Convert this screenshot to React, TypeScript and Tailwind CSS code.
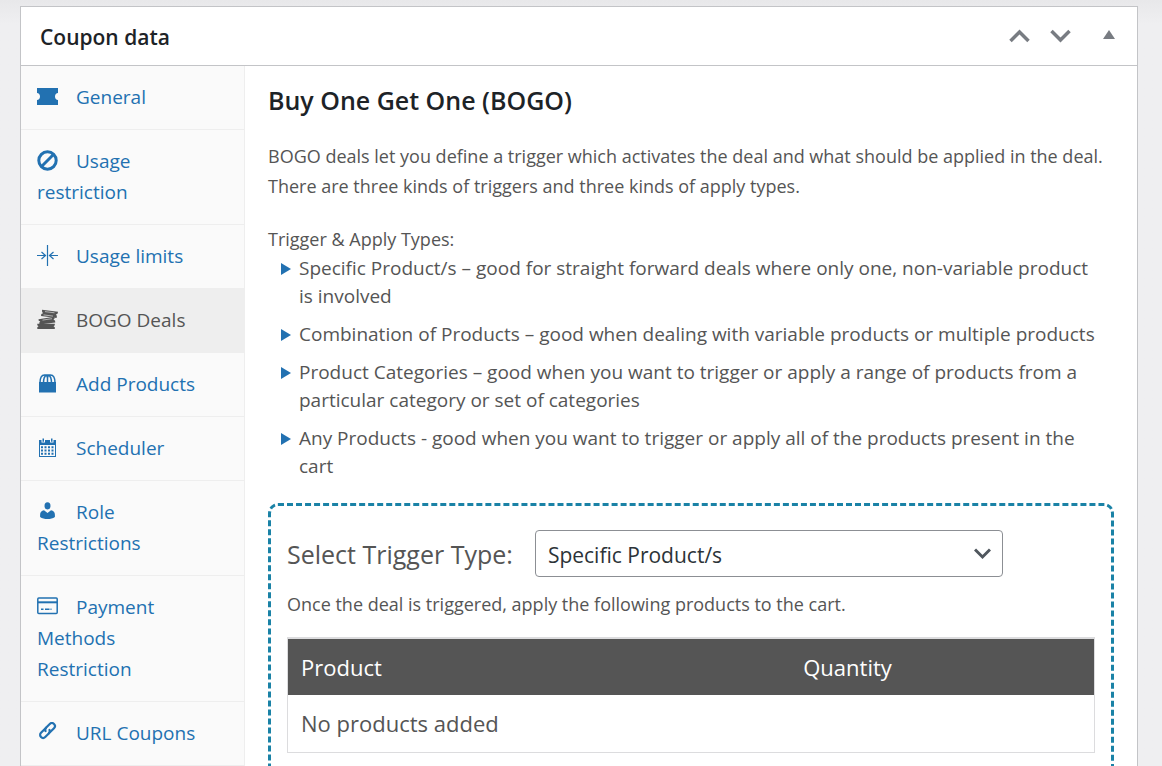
import React, { useState } from "react";

type Tab = {
  id: string;
  label: string;
  icon: React.ReactNode;
};

const TicketIcon = () => (
  <path
    fill="currentColor"
    d="M0 2h21v5c-1.700 0-3 1.500-3 3.500s1.300 3.500 3 3.500v5H0v-5c1.700 0 3-1.500 3-3.500S1.700 7 0 7z"
  />
);

const BanIcon = () => (
  <g fill="none" stroke="currentColor" strokeWidth="3">
    <circle cx="10.500" cy="10.500" r="8.700" />
    <path d="M16.700 4.300 4.300 16.700" />
  </g>
);

const LimitsIcon = () => (
  <g fill="none" stroke="currentColor" strokeWidth="1.200">
    <path d="M10.500 0v21" />
    <path d="M0 10.500h8.500M4.500 7l4 3.500-4 3.500" />
    <path d="M21 10.500h-8.500M16.500 7l-4 3.500 4 3.500" />
  </g>
);

const DealsIcon = () => (
  <g fill="currentColor">
    <path d="M.3 14.800h17.500v1.500l-1.200 1 1.200 1V20H.3v-1.700l1.200-1-1.200-1z" />
    <path d="m1.500 10.200 15.800-2.400.3 1.600-1.100 1.300 1.500.8.3 2L2.500 15.400l-.3-1.600 1.100-1.300-1.600-.8z" />
    <path d="m5 .8 16 2-.3 1.800-1.700.8.9 1.500-.3 2L4 6.900l.3-1.800L6 4.300l-.9-1.600z" />
    <path fill="none" stroke="#eee" strokeWidth=".6" d="m8 2.600 9.500 1.200M6.500 5.900l9.500 1.200M5.500 11.100l9.500-1.400" />
  </g>
);

const BagIcon = () => (
  <g>
    <path fill="currentColor" d="M2 9h17v10.500H2z" />
    <path
      fill="none"
      stroke="currentColor"
      strokeWidth="1.500"
      d="M3 10C3 4.500 4.500 2 7.500 2h6C16.500 2 18 4.500 18 10M6.500 10c0-4.500.8-7 3-8M10.500 10V5c0-1.500-.7-2.500-2-3M10.500 10V5c0-1.500.7-2.500 2-3M14.500 10c0-4.500-.8-7-3-8"
    />
  </g>
);

const CalendarIcon = () => (
  <g>
    <path
      fill="currentColor"
      fillRule="evenodd"
      d="M2 3h2.500v2.500H8V3h5v2.500h3.500V3H19v17H2zM3 8v11h15V8z"
    />
    <path fill="currentColor" d="M5.500 1.500H7v3.200H5.500zM14 1.500h1.500v3.200H14z" />
    <path
      fill="none"
      stroke="currentColor"
      strokeWidth="2"
      strokeDasharray="2 1.500"
      d="M4 10.300h13M4 13.500h13M4 16.700h13"
    />
  </g>
);

const UserIcon = () => (
  <g fill="currentColor">
    <ellipse cx="10.500" cy="4.800" rx="3" ry="3.600" />
    <path d="M7 9.300 10.500 12 14 9.300c2.500.4 3.900 2 3.900 4.500V16c-2 1.500-4.500 2-7.400 2s-5.400-.5-7.400-2v-2.200C3.100 11.300 4.500 9.700 7 9.300z" />
  </g>
);

const CardIcon = () => (
  <g fill="none" stroke="currentColor" strokeWidth="1.500">
    <rect x=".8" y="2" width="19.400" height="15.500" rx="1" />
    <path strokeWidth="2" d="M1 6.300h19" />
    <path d="M4 13.200h2.500M8 13.200h4.500M13.500 13.200h1" />
  </g>
);

const LinkIcon = () => (
  <g
    fill="none"
    stroke="currentColor"
    strokeWidth="2.200"
    strokeLinecap="round"
    transform="translate(0 -2) rotate(-45 10.500 10.500)"
  >
    <path d="M11.500 7.500H4.300a3 3 0 0 0 0 6h5c1.500 0 2.500-.8 3-2" />
    <path d="M9.500 13.500h7.200a3 3 0 0 0 0-6h-5c-1.500 0-2.500.8-3 2" />
  </g>
);

const TABS: Tab[] = [
  { id: "general", label: "General", icon: <TicketIcon /> },
  { id: "restriction", label: "Usage restriction", icon: <BanIcon /> },
  { id: "limits", label: "Usage limits", icon: <LimitsIcon /> },
  { id: "bogo", label: "BOGO Deals", icon: <DealsIcon /> },
  { id: "add", label: "Add Products", icon: <BagIcon /> },
  { id: "scheduler", label: "Scheduler", icon: <CalendarIcon /> },
  { id: "role", label: "Role Restrictions", icon: <UserIcon /> },
  { id: "payment", label: "Payment Methods Restriction", icon: <CardIcon /> },
  { id: "url", label: "URL Coupons", icon: <LinkIcon /> },
];

const TRIGGER_TYPES = [
  "Specific Product/s – good for straight forward deals where only one, non-variable product is involved",
  "Combination of Products – good when dealing with variable products or multiple products",
  "Product Categories – good when you want to trigger or apply a range of products from a particular category or set of categories",
  "Any Products - good when you want to trigger or apply all of the products present in the cart",
];

const App: React.FC = () => {
  const [activeTab, setActiveTab] = useState("bogo");
  const [trigger, setTrigger] = useState("Specific Product/s");

  return (
    <div className="h-screen overflow-hidden bg-linear-to-b from-[#e8e8ea] to-[#efeff1] to-[24px] pt-[6px] pr-6 pl-5 font-['Open_Sans','Noto_Sans',sans-serif] text-[#555]">
      <div className="border border-[#c3c4c7] bg-white">
        {/* HEADER */}
        <header className="flex h-[59px] items-center justify-between border-b border-[#c3c4c7] pr-[21px] pl-[19px]">
          <h2 className="pt-1 text-[21px] font-semibold text-[#1d2327]">Coupon data</h2>
          <div className="flex items-center text-[#787c82]">
            <button aria-label="Move up" className="mr-5">
              <svg width="21" height="20" viewBox="0 0 21 20" fill="none" stroke="currentColor" strokeWidth="3.500">
                <path d="m1.500 15 9-9 9 9" />
              </svg>
            </button>
            <button aria-label="Move down" className="mr-[31px]">
              <svg width="21" height="20" viewBox="0 0 21 20" fill="none" stroke="currentColor" strokeWidth="3.500">
                <path d="m1.500 5 9 9 9-9" />
              </svg>
            </button>
            <button aria-label="Toggle panel">
              <svg width="14" height="20" viewBox="0 0 14 20" fill="currentColor">
                <path d="M7 4l6 9H1z" />
              </svg>
            </button>
          </div>
        </header>

        <div className="flex items-stretch">
          {/* TABS */}
          <nav className="w-[224px] shrink-0 border-r border-[#eee] bg-[#fafafa]">
            {TABS.map((tab) => (
              <a
                key={tab.id}
                href={`#${tab.id}`}
                onClick={() => setActiveTab(tab.id)}
                className={`block border-b border-[#eee] py-4 pr-9 pl-4 text-[19px] leading-[31px] ${
                  activeTab === tab.id ? "bg-[#eee] text-[#555]" : "text-[#2271b1]"
                }`}
              >
                <svg width="21" height="21" viewBox="0 0 21 21" className="mr-[18px] inline-block align-[-3px]">
                  {tab.icon}
                </svg>
                {tab.label}
              </a>
            ))}
          </nav>

          {/* PANEL */}
          <main className="min-w-0 flex-1 px-[23px] pt-4">
            <h3 className="text-[25px] leading-9 font-semibold text-[#1d2327]">
              Buy One Get One (BOGO)
            </h3>

            <p className="mt-[23px] text-lg leading-[30px]">
              BOGO deals let you define a trigger which activates the deal and what should be applied
              in the deal. There are three kinds of triggers and three kinds of apply types.
            </p>

            <p className="mt-[23px] text-lg leading-[30px]">Trigger &amp; Apply Types:</p>
            <ul className="flex flex-col gap-[10px] pr-2 pl-3">
              {TRIGGER_TYPES.map((text) => (
                <li key={text} className="flex gap-2 text-[19px] leading-[28px]">
                  <svg width="11" height="28" viewBox="0 0 11 28" fill="#2271b1" className="shrink-0">
                    <path d="M1 9v12l10-6z" />
                  </svg>
                  <span>{text}</span>
                </li>
              ))}
            </ul>

            {/* TRIGGER BOX */}
            <section className="mt-[23px] rounded-[10px] border-[3px] border-dashed border-[#1a82a6] px-4 pt-6 pb-10">
              <div className="flex items-center gap-[22px]">
                <label htmlFor="trigger-type" className="pt-0.5 text-[25px] whitespace-nowrap">
                  Select Trigger Type:
                </label>
                <div className="relative w-[468px]">
                  <select
                    id="trigger-type"
                    value={trigger}
                    onChange={(e) => setTrigger(e.target.value)}
                    className="h-[47px] w-full appearance-none rounded-[4px] border border-[#8c8f94] bg-white pt-1 pr-10 pl-3 text-[21px] text-[#2c3338]"
                  >
                    <option>Specific Product/s</option>
                    <option>Combination of Products</option>
                    <option>Product Categories</option>
                    <option>Any Products</option>
                  </select>
                  <svg
                    width="17"
                    height="12"
                    viewBox="0 0 17 12"
                    fill="none"
                    stroke="#50575e"
                    strokeWidth="3"
                    className="pointer-events-none absolute top-[18px] right-3"
                  >
                    <path d="m1 1.500 7.500 7.500L16 1.500" />
                  </svg>
                </div>
              </div>

              <p className="mt-3 text-lg leading-[30px]">
                Once the deal is triggered, apply the following products to the cart.
              </p>

              <table className="mt-[18px] w-full table-fixed border border-t-2 border-[#dcdcde] text-left text-[22px]">
                <thead>
                  <tr className="h-[57px] bg-[#555] text-white">
                    <th className="w-[62.300%] px-[13px] font-medium">Product</th>
                    <th className="px-[13px] font-medium">Quantity</th>
                  </tr>
                </thead>
                <tbody>
                  <tr className="h-[57px]">
                    <td colSpan={2} className="px-[13px]">
                      No products added
                    </td>
                  </tr>
                </tbody>
              </table>
            </section>
          </main>
        </div>
      </div>
    </div>
  );
};

export default App;
